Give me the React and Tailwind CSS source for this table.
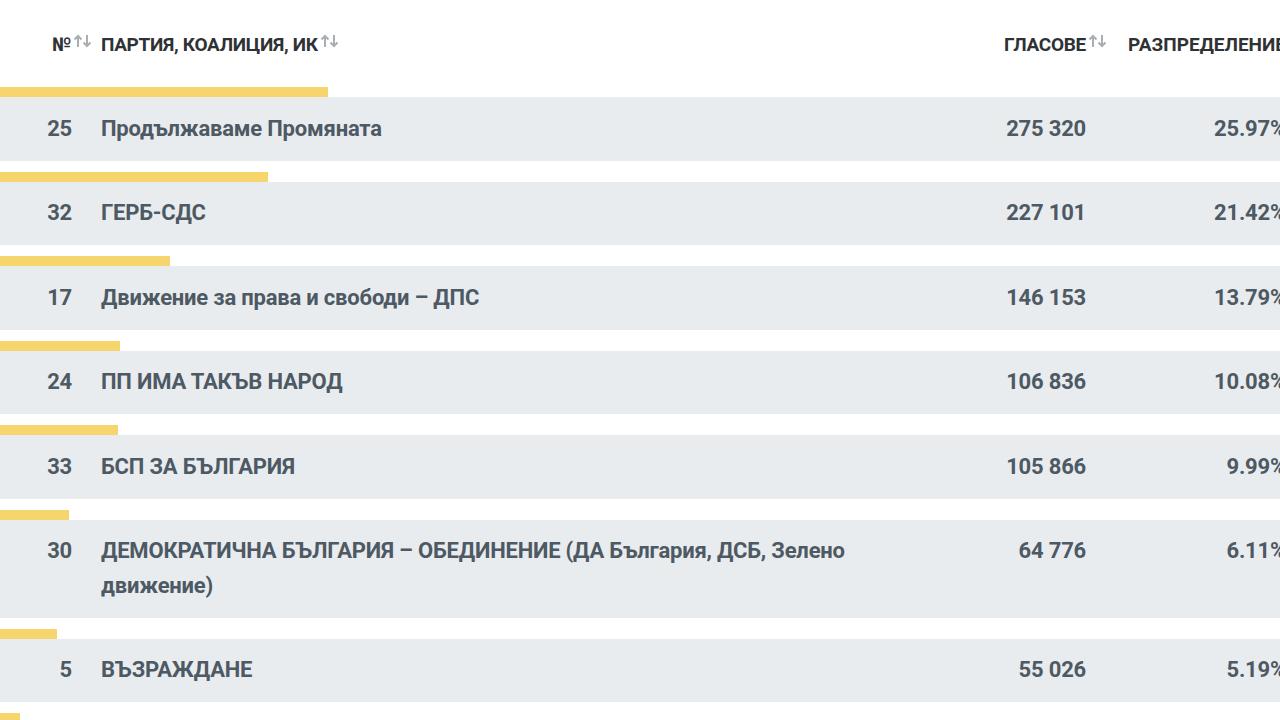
import React from "react";

const rows = [
  { n: "25", name: "Продължаваме Промяната", votes: "275 320", pct: "25.97%", bar: 328 },
  { n: "32", name: "ГЕРБ-СДС", votes: "227 101", pct: "21.42%", bar: 268 },
  { n: "17", name: "Движение за права и свободи – ДПС", votes: "146 153", pct: "13.79%", bar: 170 },
  { n: "24", name: "ПП ИМА ТАКЪВ НАРОД", votes: "106 836", pct: "10.08%", bar: 120 },
  { n: "33", name: "БСП ЗА БЪЛГАРИЯ", votes: "105 866", pct: "9.99%", bar: 118 },
  { n: "30", name: "ДЕМОКРАТИЧНА БЪЛГАРИЯ – ОБЕДИНЕНИЕ (ДА България, ДСБ, Зелено движение)", votes: "64 776", pct: "6.11%", bar: 69 },
  { n: "5", name: "ВЪЗРАЖДАНЕ", votes: "55 026", pct: "5.19%", bar: 57 },
  { n: "18", name: "БЪЛГАРСКИ ВЪЗХОД", votes: "47 000", pct: "4.45%", bar: 20 },
];

function Sort() {
  return (
    <svg width="20" height="15" viewBox="0 0 20 15" className="ml-[2px] -mt-[7px] inline-block" fill="none" stroke="#a9aeb3" strokeWidth="2">
      <path d="M5 13V2M1.5 5.5L5 2l3.5 3.5" />
      <path d="M14 1v11M10.5 8.5L14 12l3.5-3.5" />
    </svg>
  );
}

export default function App() {
  return (
    <div className="w-[1280px] h-[720px] overflow-hidden bg-white" style={{ fontFamily: "Roboto, 'Liberation Sans', sans-serif" }}>
      <div className="w-[1286px]">
        <div className="flex items-center h-[87px] pt-[3px] text-[19px] font-bold uppercase text-[#2f3235] tracking-[-0.3px]">
          <div className="w-[95px] flex items-center justify-end pr-[2px]">№<Sort /></div>
          <div className="flex-1 flex items-center pl-[6px]">Партия, коалиция, ИК<Sort /></div>
          <div className="w-[168px] flex items-center justify-end">Гласове<Sort /></div>
          <div className="w-[178px] flex items-center justify-end tracking-normal">Разпределение</div>
        </div>
        {rows.map((r, i) => (
          <div key={i} className="mb-[11px]">
            <div className="h-[10px] bg-[#f6d66c]" style={{ width: r.bar }} />
            <div className="flex items-start bg-[#e9ecef] py-[14.5px] text-[22px] leading-[34.5px] font-bold text-[#4d5963] tracking-[-0.2px]">
              <div className="w-[72px] text-right">{r.n}</div>
              <div className="flex-1 pl-[29px] pr-[60px]">{r.name}</div>
              <div className="w-[168px] text-right pr-[22px]">{r.votes}</div>
              <div className="w-[178px] text-right">{r.pct}</div>
            </div>
          </div>
        ))}
      </div>
    </div>
  );
}
